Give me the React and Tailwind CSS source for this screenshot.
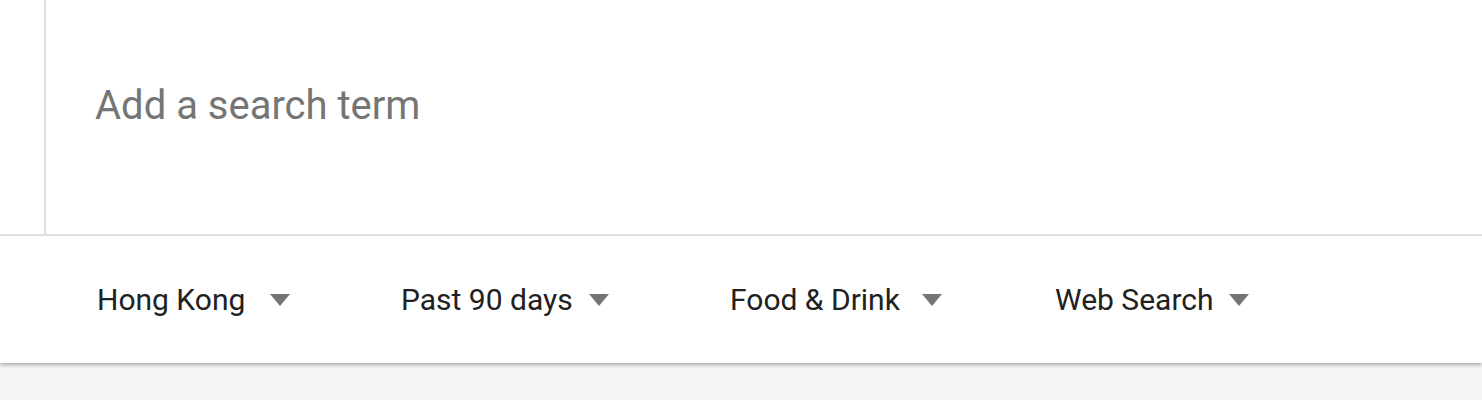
const filters = [
  { label: 'Hong Kong', gap: 'ml-[25px]', w: 'w-[304px]' },
  { label: 'Past 90 days', gap: 'ml-[16px]', w: 'w-[329px]' },
  { label: 'Food & Drink', gap: 'ml-[22px]', w: 'w-[325px]' },
  { label: 'Web Search', gap: 'ml-[15px]', w: 'w-[300px]' },
]

function Caret() {
  return (
    <svg width="20" height="12" viewBox="0 0 20 12" className="shrink-0">
      <path d="M0 0 L20 0 L10 12 Z" fill="#757575" />
    </svg>
  )
}

export default function App() {
  return (
    <div className="min-h-screen bg-[#f5f5f5]" style={{ fontFamily: 'Roboto, sans-serif' }}>
      {/* Search + filters card */}
      <div className="bg-white shadow-[0_2px_4px_rgba(0,0,0,0.3)]">
        <div className="flex h-[236px] border-b-2 border-[#e0e0e0]">
          <div className="w-[46px] border-r-2 border-[#e0e0e0]" />
          <div className="flex items-start pl-[49px] pt-[79px]">
            <span className="text-[40px] leading-[54px] text-[#757575]">Add a search term</span>
          </div>
        </div>

        {/* Filters */}
        <div className="flex items-center h-[127px] pl-[97px]">
          {filters.map((f) => (
            <div key={f.label} className={`flex items-center ${f.w}`}>
              <span className="text-[30px] text-[#212121]">{f.label}</span>
              <div className={f.gap}>
                <Caret />
              </div>
            </div>
          ))}
        </div>
      </div>
    </div>
  )
}
